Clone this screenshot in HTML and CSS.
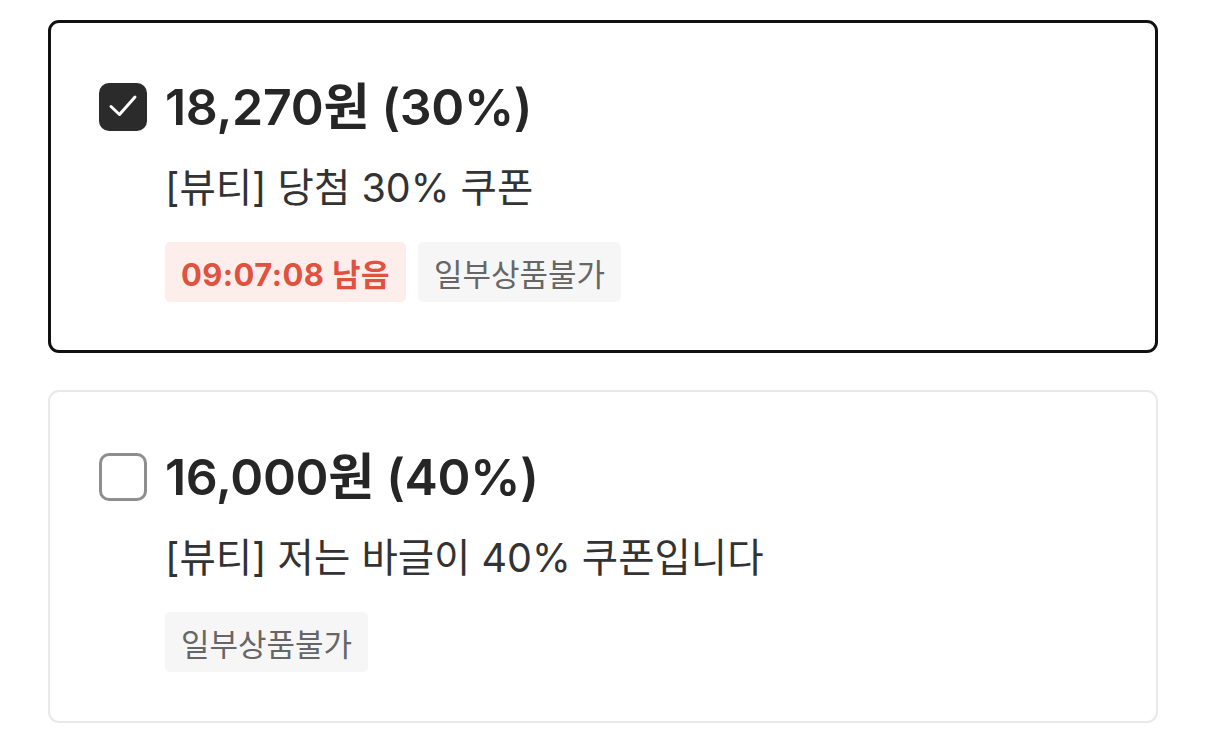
FILE: index.html
```html
<!DOCTYPE html>
<html lang="ko">
<head>
<meta charset="utf-8">
<title>쿠폰 선택</title>
<link rel="stylesheet" href="styles.css">
</head>
<body>
<div class="coupon-list">
  <div class="coupon coupon--selected">
    <div class="coupon__row">
      <span class="checkbox checkbox--checked">
        <svg width="48" height="48" viewBox="0 0 48 48"><polyline points="12,23.5 20.5,31.5 36,14" fill="none" stroke="#fff" stroke-width="3" stroke-linecap="round" stroke-linejoin="round"/></svg>
      </span>
      <div class="coupon__body">
        <div class="coupon__title">18,270원 (30%)</div>
        <div class="coupon__name">[뷰티] 당첨 30% 쿠폰</div>
        <div class="coupon__tags">
          <span class="tag tag--time">09:07:08 남음</span>
          <span class="tag">일부상품불가</span>
        </div>
      </div>
    </div>
  </div>
  <div class="coupon">
    <div class="coupon__row">
      <span class="checkbox"></span>
      <div class="coupon__body">
        <div class="coupon__title">16,000원 (40%)</div>
        <div class="coupon__name">[뷰티] 저는 바글이 40% 쿠폰입니다</div>
        <div class="coupon__tags">
          <span class="tag">일부상품불가</span>
        </div>
      </div>
    </div>
  </div>
</div>
</body>
</html>
```
FILE: styles.css
```css
* { box-sizing: border-box; }
html, body { margin: 0; padding: 0; background: #fff; }
body {
  font-family: "Inter", "Noto Sans CJK KR", sans-serif;
  color: #2b2b2b;
}
.coupon-list {
  display: flex;
  flex-direction: column;
  gap: 37px;
  padding: 20px 48px;
}
.coupon {
  border: 2px solid #e9e9e9;
  border-radius: 11px;
  padding: 61px 49px 49px;
}
.coupon--selected {
  border: 3px solid #111;
  padding: 60px 48px 48px;
}
.coupon__row {
  display: flex;
  align-items: flex-start;
  gap: 18px;
}
.checkbox {
  flex: none;
  width: 48px;
  height: 48px;
  border: 3px solid #8e8e8e;
  border-radius: 10px;
  display: block;
}
.checkbox--checked {
  border: none;
  background: #2b2b2b;
}
.checkbox svg { display: block; }
.coupon__body {
  display: flex;
  flex-direction: column;
}
.coupon__title {
  font-size: 50px;
  font-weight: 600;
  line-height: 48px;
  letter-spacing: -0.3px;
  color: #262626;
}
.coupon__name {
  margin-top: 33px;
  font-size: 39.5px;
  line-height: 48px;
  color: #333;
}
.coupon__tags {
  margin-top: 30px;
  display: flex;
  gap: 12px;
}
.tag {
  height: 60px;
  padding: 0 16px;
  border-radius: 5px;
  background: #f6f6f6;
  color: #666;
  font-size: 31px;
  display: flex;
  align-items: center;
}
.tag--time {
  background: #fdeeec;
  color: #e0523f;
  font-weight: 700;
  letter-spacing: 0.4px;
}
```
